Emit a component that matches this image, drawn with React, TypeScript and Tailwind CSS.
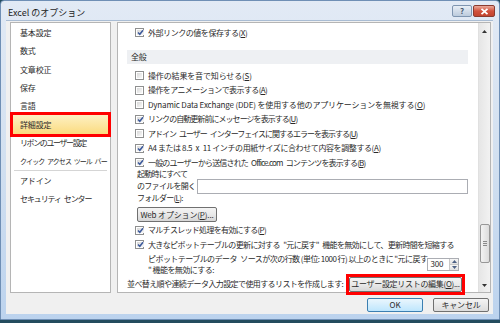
import React from "react";

function Check({ checked }: { checked?: boolean }) {
  return (
    <span className="w-[9px] h-[9px] shrink-0 border border-[#8e8f8f] bg-white p-[1px] flex">
      <span className="flex-1 bg-gradient-to-br from-[#d8d8d8] to-[#f8f8f8] flex items-center justify-center">
        {checked && (
          <svg width="7" height="7" viewBox="0 0 7 7">
            <path d="M1 3.5 L2.8 5.3 L6 1.2" fill="none" stroke="#3d5a9c" strokeWidth="1.5" />
          </svg>
        )}
      </span>
    </span>
  );
}

function Row({
  checked,
  children,
  className = "",
}: {
  checked?: boolean;
  children: React.ReactNode;
  className?: string;
}) {
  return (
    <div className="h-[14.5px] flex items-center pl-[17px] gap-[4px] whitespace-nowrap">
      <Check checked={checked} />
      <span className={className}>{children}</span>
    </div>
  );
}

const U = ({ children }: { children: React.ReactNode }) => <span className="underline">{children}</span>;

function WinButton({ children, className = "" }: { children: React.ReactNode; className?: string }) {
  return (
    <div
      className={`h-[15px] shrink-0 rounded-[2px] border border-[#707070] bg-gradient-to-b from-[#f4f4f4] via-[#e9e9e9] to-[#d6d6d6] flex items-center justify-center whitespace-nowrap ${className}`}
    >
      {children}
    </div>
  );
}

const navItems = ["基本設定", "数式", "文章校正", "保存", "言語"];
const sp = "\u2002";

export default function App() {
  return (
    <div className="w-[500px] h-[323px] bg-[#234c5e] text-[#2a2a2a] text-[8px] tracking-[-0.15px] leading-none font-['Noto_Sans_CJK_JP','Noto_Sans',sans-serif]">
      <div className="h-[320px] border border-[#6f8fb5] rounded-t-[4px] bg-gradient-to-b from-[#e2eaf5] via-[#d2e0f0] to-[#bcd3ee] flex flex-col">
        {/* Title bar */}
        <div className="h-[19px] flex items-start pl-[7px] pr-[4px]">
          <span className="text-[9px] tracking-normal mt-[7px] text-[#1e1e1e]">Excel のオプション</span>
          <div className="ml-auto mt-[4px] flex gap-[1px]">
            <div className="w-[20px] h-[12px] rounded-[2px] border border-[#7f95b0] bg-gradient-to-b from-[#e8eef6] to-[#bccbdd] flex items-center justify-center text-[8px] font-bold text-[#4a5b70]">
              ?
            </div>
            <div className="w-[22px] h-[12px] rounded-[2px] border border-[#8a3b30] bg-gradient-to-b from-[#e9a99b] via-[#d1503c] to-[#c2442e] flex items-center justify-center">
              <svg width="9" height="7" viewBox="0 0 9 7">
                <path d="M1.5 0.8 L7.5 6.2 M7.5 0.8 L1.5 6.2" stroke="#fff" strokeWidth="1.8" />
              </svg>
            </div>
          </div>
        </div>

        {/* Client area */}
        <div className="flex-1 ml-[5px] mr-[6px] mb-[5px] bg-[#f0f0f0] border-t border-[#a9bcd3] flex flex-col pl-[4px] pr-[2px] pt-[1px]">
          <div className="h-[271px] flex gap-[6px]">
            {/* Left nav */}
            <div className="w-[101px] shrink-0 bg-white border border-[#b5b5b5] pt-[1px] flex flex-col">
              {navItems.map((t) => (
                <div key={t} className="h-[18.3px] flex items-center pl-[9px]">
                  {t}
                </div>
              ))}
              <div className="relative h-[18.3px] mx-[2px] bg-gradient-to-b from-[#fdf0c2] to-[#fbdb7e] flex items-center pl-[7px]">
                詳細設定
                <div className="absolute -inset-[3px] border-[3px] border-[#ff0000]" />
              </div>
              <div className="h-[18.3px] flex items-center pl-[9px] whitespace-nowrap tracking-[-1.4px]">リボンのユーザー設定</div>
              <div className="h-[18.3px] flex items-center pl-[9px] whitespace-nowrap text-[7px] tracking-[-0.9px]">
                {`クイック${sp}アクセス${sp}ツール${sp}バー`}
              </div>
              <div className="h-px mx-[3px] bg-[#d5d5d5]" />
              <div className="h-[18.3px] flex items-center pl-[9px]">アドイン</div>
              <div className="h-[18.3px] flex items-center pl-[9px] whitespace-nowrap tracking-[-1.1px]">{`セキュリティ${sp}センター`}</div>
            </div>

            {/* Right pane */}
            <div className="flex-1 min-w-0 bg-white border border-[#b5b5b5] flex">
              <div className="flex-1 min-w-0 flex flex-col pt-[3px]">
                <Row checked className="tracking-[-0.45px]">
                  外部リンクの値を保存する(<U>X</U>)
                </Row>
                <div className="mt-[10px] mx-[9px] mr-[10px] h-[15px] bg-[#eef0f3] flex items-center pl-[4px]">全般</div>
                <div className="mt-[5px] flex flex-col">
                  <Row>
                    操作の結果を音で知らせる(<U>S</U>)
                  </Row>
                  <Row className="tracking-[-0.6px]">
                    操作をアニメーションで表示する(<U>A</U>)
                  </Row>
                  <Row>
                    Dynamic Data Exchange (DDE) を使用する他のアプリケーションを無視する(<U>O</U>)
                  </Row>
                  <Row checked className="tracking-[-0.95px]">
                    リンクの自動更新前にメッセージを表示する(<U>U</U>)
                  </Row>
                  <Row className="tracking-[-1px]">
                    {`アドイン${sp}ユーザー${sp}インターフェイスに関するエラーを表示する(`}
                    <U>U</U>)
                  </Row>
                  <Row checked className="tracking-[-0.4px]">
                    {`A4 または 8.5${sp}x${sp}11 インチの用紙サイズに合わせて内容を調整する(`}
                    <U>A</U>)
                  </Row>
                  <Row checked className="tracking-[-0.85px]">
                    {`一般のユーザーから送信された${sp}Office.com${sp}コンテンツを表示する(`}
                    <U>B</U>)
                  </Row>
                </div>

                {/* Startup folder */}
                <div className="h-[36px] mt-[-2px] flex items-center pl-[19px] pr-[10px]">
                  <div className="w-[60px] shrink-0 flex flex-col leading-[12px] whitespace-nowrap tracking-[-0.7px]">
                    <span>起動時にすべて</span>
                    <span>のファイルを開く</span>
                    <span>
                      フォルダー(<U>L</U>):
                    </span>
                  </div>
                  <div className="flex-1 h-[15px] border border-[#abadb3] bg-white" />
                </div>

                <div className="mt-[3px] pl-[19px] flex">
                  <WinButton className="w-[80px]">
                    Web オプション(<U>P</U>)...
                  </WinButton>
                </div>

                <div className="mt-[1px]">
                  <Row checked className="tracking-[-0.7px]">
                    マルチスレッド処理を有効にする(<U>P</U>)
                  </Row>
                  <Row checked className="tracking-[-0.65px]">
                    {`大きなピボットテーブルの更新に対する${sp}"元に戻す"${sp}機能を無効にして、更新時間を短縮する`}
                  </Row>
                </div>

                <div className="h-[22px] mt-[1px] flex items-center pl-[30px] pr-[21px]">
                  <div className="flex flex-col leading-[11px] whitespace-nowrap tracking-[-0.55px]">
                    <span>{`ピボットテーブルのデータ${sp}ソースが次の行数 (単位: 1000 行) 以上のときに "元に戻す`}</span>
                    <span>" 機能を無効にする:</span>
                  </div>
                  <div className="ml-auto w-[32px] h-[13px] shrink-0 border border-[#abadb3] bg-white flex">
                    <span className="flex-1 flex items-center pl-[2px]">300</span>
                    <div className="w-[9px] flex flex-col border-l border-[#c8c8c8]">
                      <div className="flex-1 bg-gradient-to-b from-[#f6f6f6] to-[#e2e2e2] flex items-center justify-center border-b border-[#c8c8c8]">
                        <svg width="5" height="3" viewBox="0 0 5 3">
                          <path d="M0 3 L2.5 0 L5 3 Z" fill="#4d6185" />
                        </svg>
                      </div>
                      <div className="flex-1 bg-gradient-to-b from-[#f6f6f6] to-[#e2e2e2] flex items-center justify-center">
                        <svg width="5" height="3" viewBox="0 0 5 3">
                          <path d="M0 0 L2.5 3 L5 0 Z" fill="#4d6185" />
                        </svg>
                      </div>
                    </div>
                  </div>
                </div>

                <div className="h-[17px] mt-[1px] flex items-center pl-[9px] pr-[16px] whitespace-nowrap">
                  <span className="min-w-0 tracking-[-0.6px]">並べ替え順や連続データ入力設定で使用するリストを作成します:</span>
                  <div className="ml-auto relative shrink-0">
                    <WinButton className="w-[113px] tracking-[-0.3px]">
                      ユーザー設定リストの編集(<U>O</U>)...
                    </WinButton>
                    <div className="absolute -inset-[3px] border-[3px] border-[#ff0000]" />
                  </div>
                </div>
              </div>

              {/* Scrollbar */}
              <div className="w-[12px] shrink-0 bg-gradient-to-r from-[#e6e6e6] to-[#f2f2f2] border-l border-[#e0e0e0] flex flex-col items-center">
                <div className="h-[16px] flex items-center justify-center">
                  <svg width="5" height="3" viewBox="0 0 5 3">
                    <path d="M0 3 L2.5 0 L5 3 Z" fill="#333" />
                  </svg>
                </div>
                <div className="flex-1" />
                <div className="w-[10px] h-[39px] rounded-[2px] border border-[#979797] bg-gradient-to-r from-[#f3f3f3] to-[#dcdcdc] flex flex-col items-center justify-center gap-[1px]">
                  <div className="w-[4px] h-px bg-[#8a8a8a]" />
                  <div className="w-[4px] h-px bg-[#8a8a8a]" />
                  <div className="w-[4px] h-px bg-[#8a8a8a]" />
                </div>
                <div className="h-[29px] flex items-end justify-center pb-[5px]">
                  <svg width="5" height="3" viewBox="0 0 5 3">
                    <path d="M0 0 L2.5 3 L5 0 Z" fill="#333" />
                  </svg>
                </div>
              </div>
            </div>
          </div>

          {/* Dialog buttons */}
          <div className="mt-[5px] flex justify-end gap-[10px] pr-[2px]">
            <div className="w-[56px] h-[14px] rounded-[2px] border border-[#3c7fb1] bg-gradient-to-b from-[#eaf6fd] to-[#bee6fd] flex items-center justify-center">
              OK
            </div>
            <div className="w-[56px] h-[14px] rounded-[2px] border border-[#707070] bg-gradient-to-b from-[#f4f4f4] to-[#dcdcdc] flex items-center justify-center">
              キャンセル
            </div>
          </div>
        </div>
      </div>
    </div>
  );
}
